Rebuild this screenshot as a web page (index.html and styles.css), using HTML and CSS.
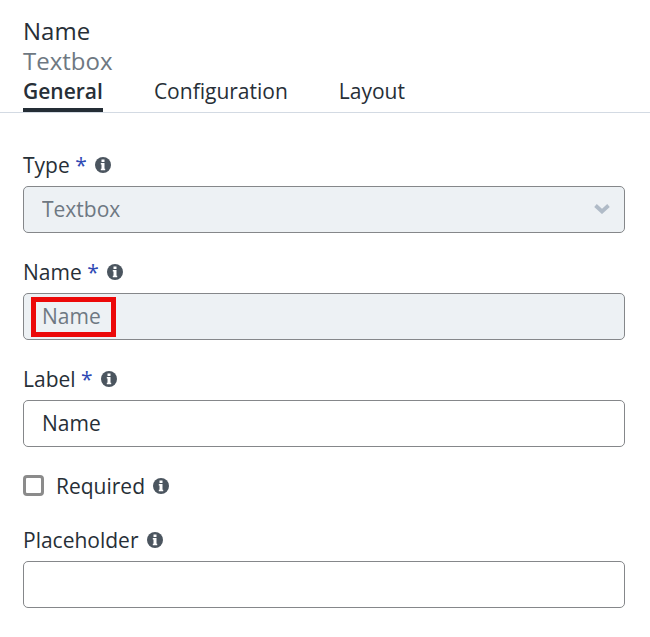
FILE: index.html
```html
<!DOCTYPE html>
<html lang="en">
<head>
  <meta charset="utf-8">
  <title>Name</title>
  <link rel="stylesheet" href="styles.css">
</head>
<body>
  <svg class="defs" aria-hidden="true">
    <symbol id="info" viewBox="0 0 16 16">
      <circle cx="8" cy="8" r="8" fill="#4b555f"/>
      <path d="M6.500 2.500h3v2.500h-3zM5.800 6h3.700v7.200h-3V7.500h-.7zM9 11.700h1.200v1.500H9zM5.800 11.700h1v1.500h-1z" fill="#fff"/>
    </symbol>
  </svg>
  <header class="header">
    <h1 class="title">Name</h1>
    <p class="subtitle">Textbox</p>
    <nav class="tabs">
      <a class="tab tab-active" href="#general">General</a>
      <a class="tab" href="#configuration">Configuration</a>
      <a class="tab" href="#layout">Layout</a>
    </nav>
  </header>
  <form class="form" id="general">
    <div class="field">
      <div class="label-row">
        <label for="type">Type <span class="star">*</span></label>
        <svg class="info"><use href="#info"/></svg>
      </div>
      <div class="control-wrap">
        <select class="control" id="type" disabled><option>Textbox</option></select>
        <svg class="chevron" viewBox="0 0 16 10"><path d="M1.500 1.500 8 7.500l6.500-6" fill="none" stroke="#b0bbc7" stroke-width="3.800"/></svg>
      </div>
    </div>
    <div class="field">
      <div class="label-row">
        <label for="name">Name <span class="star">*</span></label>
        <svg class="info"><use href="#info"/></svg>
      </div>
      <div class="control-wrap">
        <input class="control" id="name" type="text" value="Name" disabled>
        <span class="highlight"></span>
      </div>
    </div>
    <div class="field">
      <div class="label-row">
        <label for="label">Label <span class="star">*</span></label>
        <svg class="info"><use href="#info"/></svg>
      </div>
      <input class="control" id="label" type="text" value="Name">
    </div>
    <div class="label-row">
      <input class="check" id="required" type="checkbox">
      <label for="required">Required</label>
      <svg class="info"><use href="#info"/></svg>
    </div>
    <div class="field">
      <div class="label-row">
        <label for="placeholder">Placeholder</label>
        <svg class="info"><use href="#info"/></svg>
      </div>
      <input class="control" id="placeholder" type="text">
    </div>
  </form>
</body>
</html>
```
FILE: styles.css
```css
* {
  box-sizing: border-box;
}

body {
  margin: 0;
  background: #fff;
  color: #272f37;
  font-family: "Open Sans", "Noto Sans", sans-serif;
  font-size: 21px;
  line-height: 30px;
}

.defs {
  display: none;
}

.header {
  padding: 16px 23px 0;
  border-bottom: 1px solid #d3dae3;
}

.title,
.subtitle {
  margin: 0;
  font-size: 24px;
  font-weight: 400;
}

.subtitle {
  color: #6e7882;
}

.tabs {
  display: flex;
  gap: 51px;
}

.tab {
  padding-bottom: 2px;
  border-bottom: 4px solid transparent;
  color: inherit;
  text-decoration: none;
}

.tab-active {
  border-color: #242d35;
  font-weight: 600;
}

.form {
  display: flex;
  flex-direction: column;
  gap: 24px;
  padding: 37px 25px 24px 23px;
}

.field {
  display: flex;
  flex-direction: column;
  gap: 6px;
}

.label-row {
  display: flex;
  align-items: center;
}

.star {
  color: #2f49b4;
}

.info {
  width: 16px;
  height: 16px;
  margin-left: 8px;
}

.control-wrap {
  position: relative;
}

.control {
  display: block;
  width: 100%;
  height: 47px;
  margin: 0;
  padding: 0 18px 2px;
  border: 1px solid #85878a;
  border-radius: 5px;
  background: #fff;
  color: #272f37;
  font: inherit;
  appearance: none;
}

.control:disabled {
  background: #edf1f4;
  color: #6e7882;
  opacity: 1;
}

.chevron {
  position: absolute;
  top: 18px;
  right: 15px;
  width: 16px;
  height: 10px;
}

.highlight {
  position: absolute;
  top: 4px;
  left: 8px;
  width: 85px;
  height: 40px;
  border: 5px solid #ec0909;
}

.check {
  width: 21px;
  height: 21px;
  margin: 0 12px 1px 0;
  border: 3px solid #8b8b8b;
  border-radius: 4px;
  background: #fff;
  appearance: none;
}
```
